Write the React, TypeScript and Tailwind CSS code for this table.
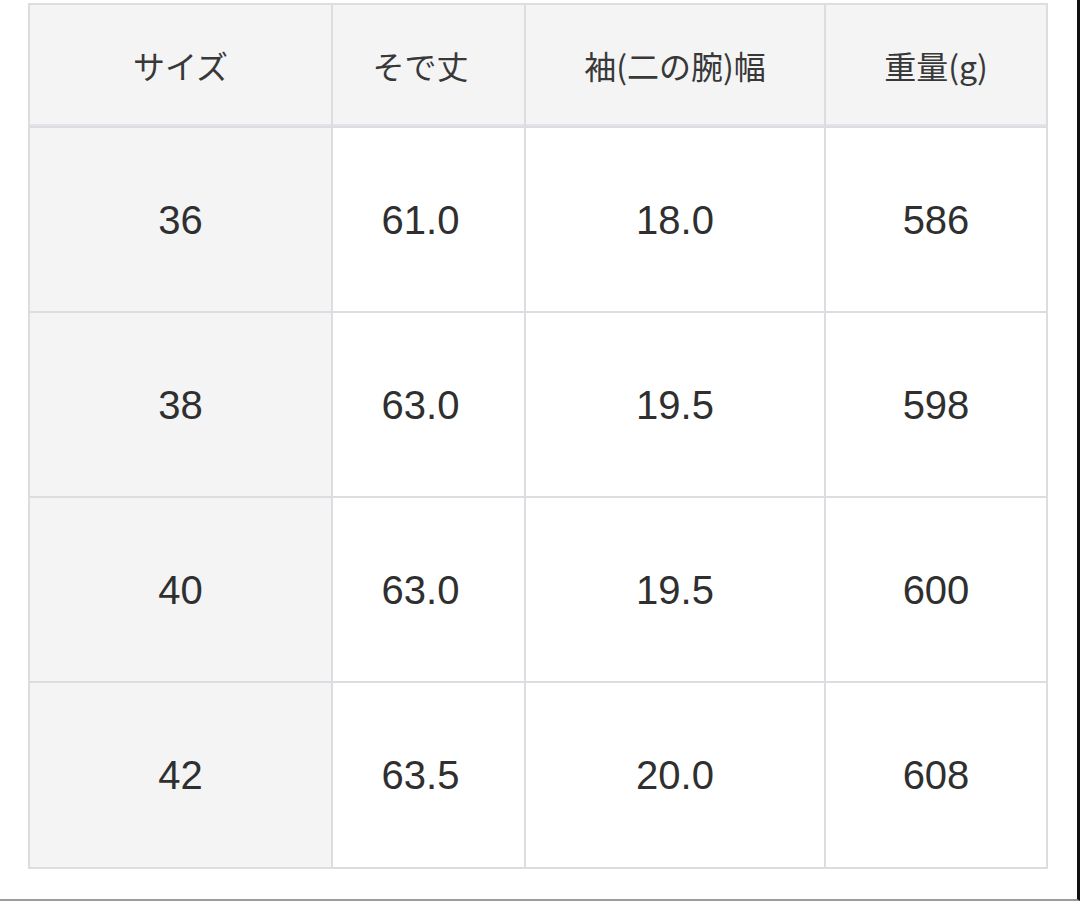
import React from "react"

const headers = ["サイズ", "そで丈", "袖(二の腕)幅", "重量(g)"]

const rows = [
  ["36", "61.0", "18.0", "586"],
  ["38", "63.0", "19.5", "598"],
  ["40", "63.0", "19.5", "600"],
  ["42", "63.5", "20.0", "608"],
]

// column tweaks: first column is shaded, second one sits slightly left
const colClass = [
  "bg-[#f4f4f5]",
  "bg-white pr-4",
  "bg-white",
  "bg-white",
]

const App = () => {
  return (
    <div
      className="w-[1080px] h-[901px] bg-white border-r-[3px] border-r-[#111] border-b-2 border-b-[#9c9c9c] pl-[28px] pt-[3px]"
      style={{ fontFamily: '"Liberation Sans", Arial, "Noto Sans CJK JP", sans-serif' }}
    >
      <div className="grid grid-cols-[301px_191px_298px_220px] grid-rows-[121px_183px_183px_183px_184px] gap-[2px] p-[2px] bg-[#dcdce1] w-[1020px]">
        {headers.map((h, i) => (
          <div
            key={h}
            className={`flex items-center justify-center bg-[#f4f4f5] border-b-2 border-[#e4e4e8] text-[32px] text-[#383838] ${i === 1 ? "pr-4" : ""}`}
            style={{ fontFamily: '"Noto Sans CJK JP", "Liberation Sans", sans-serif' }}
          >
            {h}
          </div>
        ))}

        {rows.map((row) =>
          row.map((cell, i) => (
            <div
              key={row[0] + "-" + i}
              className={`flex items-center justify-center text-[40px] text-[#2f2f2f] ${colClass[i]}`}
            >
              {cell}
            </div>
          ))
        )}
      </div>
    </div>
  )
}

export default App
